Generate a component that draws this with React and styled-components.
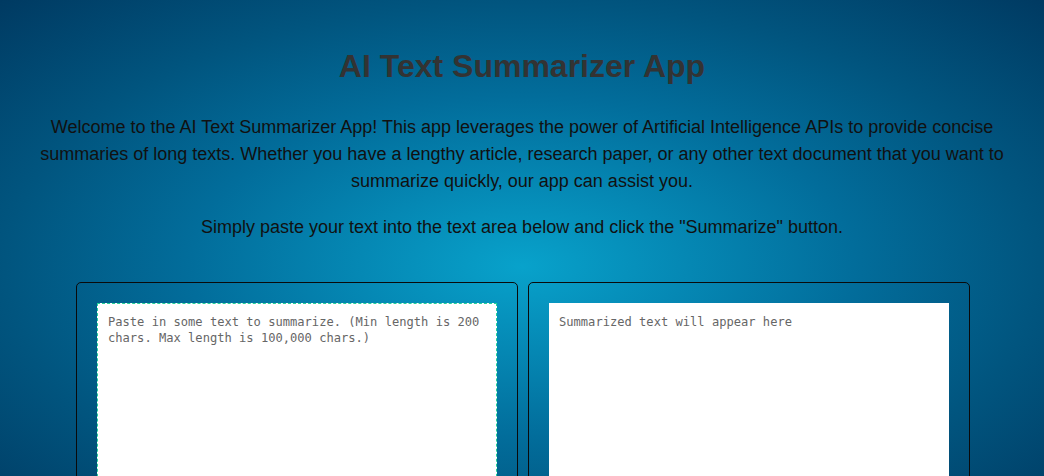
import styled, { createGlobalStyle } from "styled-components";

const GlobalStyle = createGlobalStyle`
  html, body {
    margin: 0;
    padding: 0;
  }
  body {
    min-height: 100vh;
    font-family: "Liberation Sans", Arial, sans-serif;
    background: radial-gradient(
      ellipse at 50% 56%,
      #08a2cb 0%,
      #0588b4 22%,
      #026d9b 45%,
      #01557f 70%,
      #003a62 100%
    );
    background-attachment: fixed;
  }
`;

function App() {
  return (
    <>
      <GlobalStyle />
      <Page>
        <Title>AI Text Summarizer App</Title>
        <Intro>
          Welcome to the AI Text Summarizer App! This app leverages the power of
          Artificial Intelligence APIs to provide concise summaries of long
          texts. Whether you have a lengthy article, research paper, or any
          other text document that you want to summarize quickly, our app can
          assist you.
        </Intro>
        <Intro>
          Simply paste your text into the text area below and click the
          "Summarize" button.
        </Intro>

        <Panels>
          <Panel>
            <TextBox
              $focused
              placeholder="Paste in some text to summarize. (Min length is 200 chars. Max length is 100,000 chars.)"
            />
          </Panel>
          <Panel>
            <TextBox
              readOnly
              placeholder="Summarized text will appear here"
            />
          </Panel>
        </Panels>
      </Page>
    </>
  );
}

const Page = styled.main`
  padding: 48px 36px 40px;
  text-align: center;
`;

const Title = styled.h1`
  margin: 0 0 29px;
  font-size: 32px;
  line-height: 37px;
  font-weight: 700;
  color: #333;
`;

const Intro = styled.p`
  margin: 0 0 19px;
  font-size: 18px;
  line-height: 27px;
  color: #111;
`;

const Panels = styled.div`
  display: flex;
  justify-content: center;
  gap: 10px;
  margin-top: 41px;
  padding-left: 2px;
`;

const Panel = styled.section`
  padding: 20px;
  border: 1px solid #0a0a0a;
  border-radius: 5px;
  display: flex;
`;

const TextBox = styled.textarea`
  box-sizing: border-box;
  width: 400px;
  height: 420px;
  margin: 0;
  padding: ${(p) => (p.$focused ? "10px" : "10px 9px")};
  border: 1px ${(p) => (p.$focused ? "dashed #22d39a" : "solid #fff")};
  border-radius: 0;
  background: #fff;
  resize: none;
  outline: none;
  font-family: "DejaVu Sans Mono", "Liberation Mono", monospace;
  font-size: 12.1px;
  line-height: 16px;
  color: #333;
  overflow: hidden;

  &::placeholder {
    color: #666;
    opacity: 1;
  }
`;

export default App;
